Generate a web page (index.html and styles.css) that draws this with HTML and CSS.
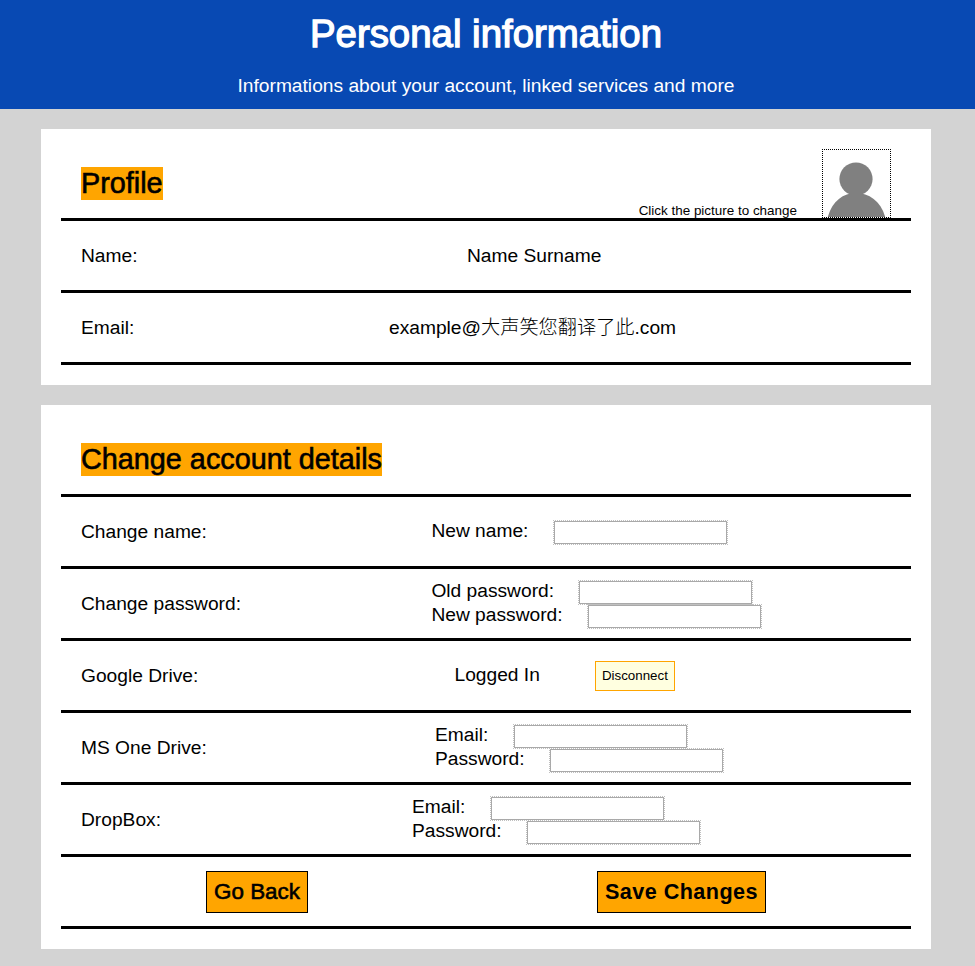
FILE: index.html
```html
<!DOCTYPE html>
<html lang="en">
<head>
<meta charset="utf-8">
<title>Personal information</title>
<link rel="stylesheet" href="styles.css">
</head>
<body>
<header class="banner">
  <h1>Personal information</h1>
  <p>Informations about your account, linked services and more</p>
</header>
<main>
  <section class="card">
    <div class="head">
      <h2>Profile</h2>
      <div class="photo">
        <span class="hint">Click the picture to change</span>
        <svg class="avatar" width="69" height="69" viewBox="0 0 67 67"><circle cx="33" cy="29" r="16.6" fill="#808080"/><path d="M4.5 68C9 51 20 43 33 43s25 8 29.500 25z" fill="#808080"/></svg>
      </div>
    </div>
    <div class="row"><span class="label">Name:</span><span class="value name">Name Surname</span></div>
    <div class="row"><span class="label">Email:</span><span class="value mail">example@<span class="cjk">大声笑您翻译了此</span>.com</span></div>
  </section>
  <section class="card">
    <div class="head"><h2>Change account details</h2></div>
    <div class="row"><span class="label">Change name:</span><div class="fields change"><label>New name:<input type="text"></label></div></div>
    <div class="row"><span class="label">Change password:</span><div class="fields change"><label>Old password:<input type="password"></label><label>New password:<input type="password"></label></div></div>
    <div class="row"><span class="label">Google Drive:</span><div class="drive"><span class="status">Logged In</span><button class="disconnect">Disconnect</button></div></div>
    <div class="row"><span class="label">MS One Drive:</span><div class="fields onedrive"><label>Email:<input type="text"></label><label>Password:<input type="password"></label></div></div>
    <div class="row"><span class="label">DropBox:</span><div class="fields dropbox"><label>Email:<input type="text"></label><label>Password:<input type="password"></label></div></div>
    <div class="row actions"><button class="back">Go Back</button><button class="save">Save Changes</button></div>
  </section>
</main>
</body>
</html>
```
FILE: styles.css
```css
* { box-sizing: border-box; }
body { margin: 0; background: #d3d3d3; color: #000; font-family: "Liberation Sans", Arial, sans-serif; font-size: 19.2px; }
.banner { height: 109px; background: #0849b3; color: #fff; text-align: center; padding: 11px 3px 0 0; }
h1 { margin: 0; font-size: 38.4px; line-height: 46px; font-weight: 400; -webkit-text-stroke: 1.3px #fff; }
.banner p { margin: 18px 0 0; line-height: 22px; }
main { padding: 20px 44px 17px 41px; display: flex; flex-direction: column; gap: 20px; }
.card { background: #fff; padding: 20px; }
.head { height: 72px; border-bottom: 3px solid #000; display: flex; justify-content: space-between; padding: 0 20px; }
h2 { margin: 18px 0 0; height: 33px; line-height: 33px; font-size: 28.8px; font-weight: 400; background: orange; -webkit-text-stroke: .6px #000; }
.photo { display: flex; align-items: flex-end; gap: 25px; font-size: 13.44px; }
.hint { line-height: 15px; }
.avatar { border: 1px dotted #000; }
.row { height: 72px; border-bottom: 3px solid #000; display: flex; align-items: center; padding: 0 20px; }
.label { flex: none; width: 300px; }
.name { margin-left: 86px; }
.mail { margin-left: 8px; }
.cjk { font-family: "Noto Sans CJK SC", sans-serif; font-weight: 300; line-height: 20px; }
.fields label { display: flex; align-items: center; height: 24px; line-height: 22px; padding-bottom: 2px; }
.change { margin-left: 50.400px; }
.onedrive { margin-left: 54px; }
.dropbox { margin-left: 31px; }
input { flex: none; width: 173px; height: 23px; margin: 3px 0 0 25.3px; padding: 0; border: 1px solid #a9a9a9; outline: 1px dotted #c0c0c0; background: #fff; }
.drive { margin-left: 73.500px; display: flex; align-items: center; gap: 55px; }
.status { padding-bottom: 2px; }
button { color: #000; font-family: inherit; padding: 0; }
.disconnect { width: 80px; height: 30px; border: 1px solid orange; background: #ffffe0; font-size: 13.333px; }
.back, .save { height: 42px; border: 1px solid #000; background: orange; font-size: 22.4px; }
.back { margin-left: 125px; width: 102px; -webkit-text-stroke: .6px #000; }
.save { margin-left: 289px; width: 169px; padding-top: 1px; font-size: 21.6px; font-weight: 700; letter-spacing: .45px; }
```
